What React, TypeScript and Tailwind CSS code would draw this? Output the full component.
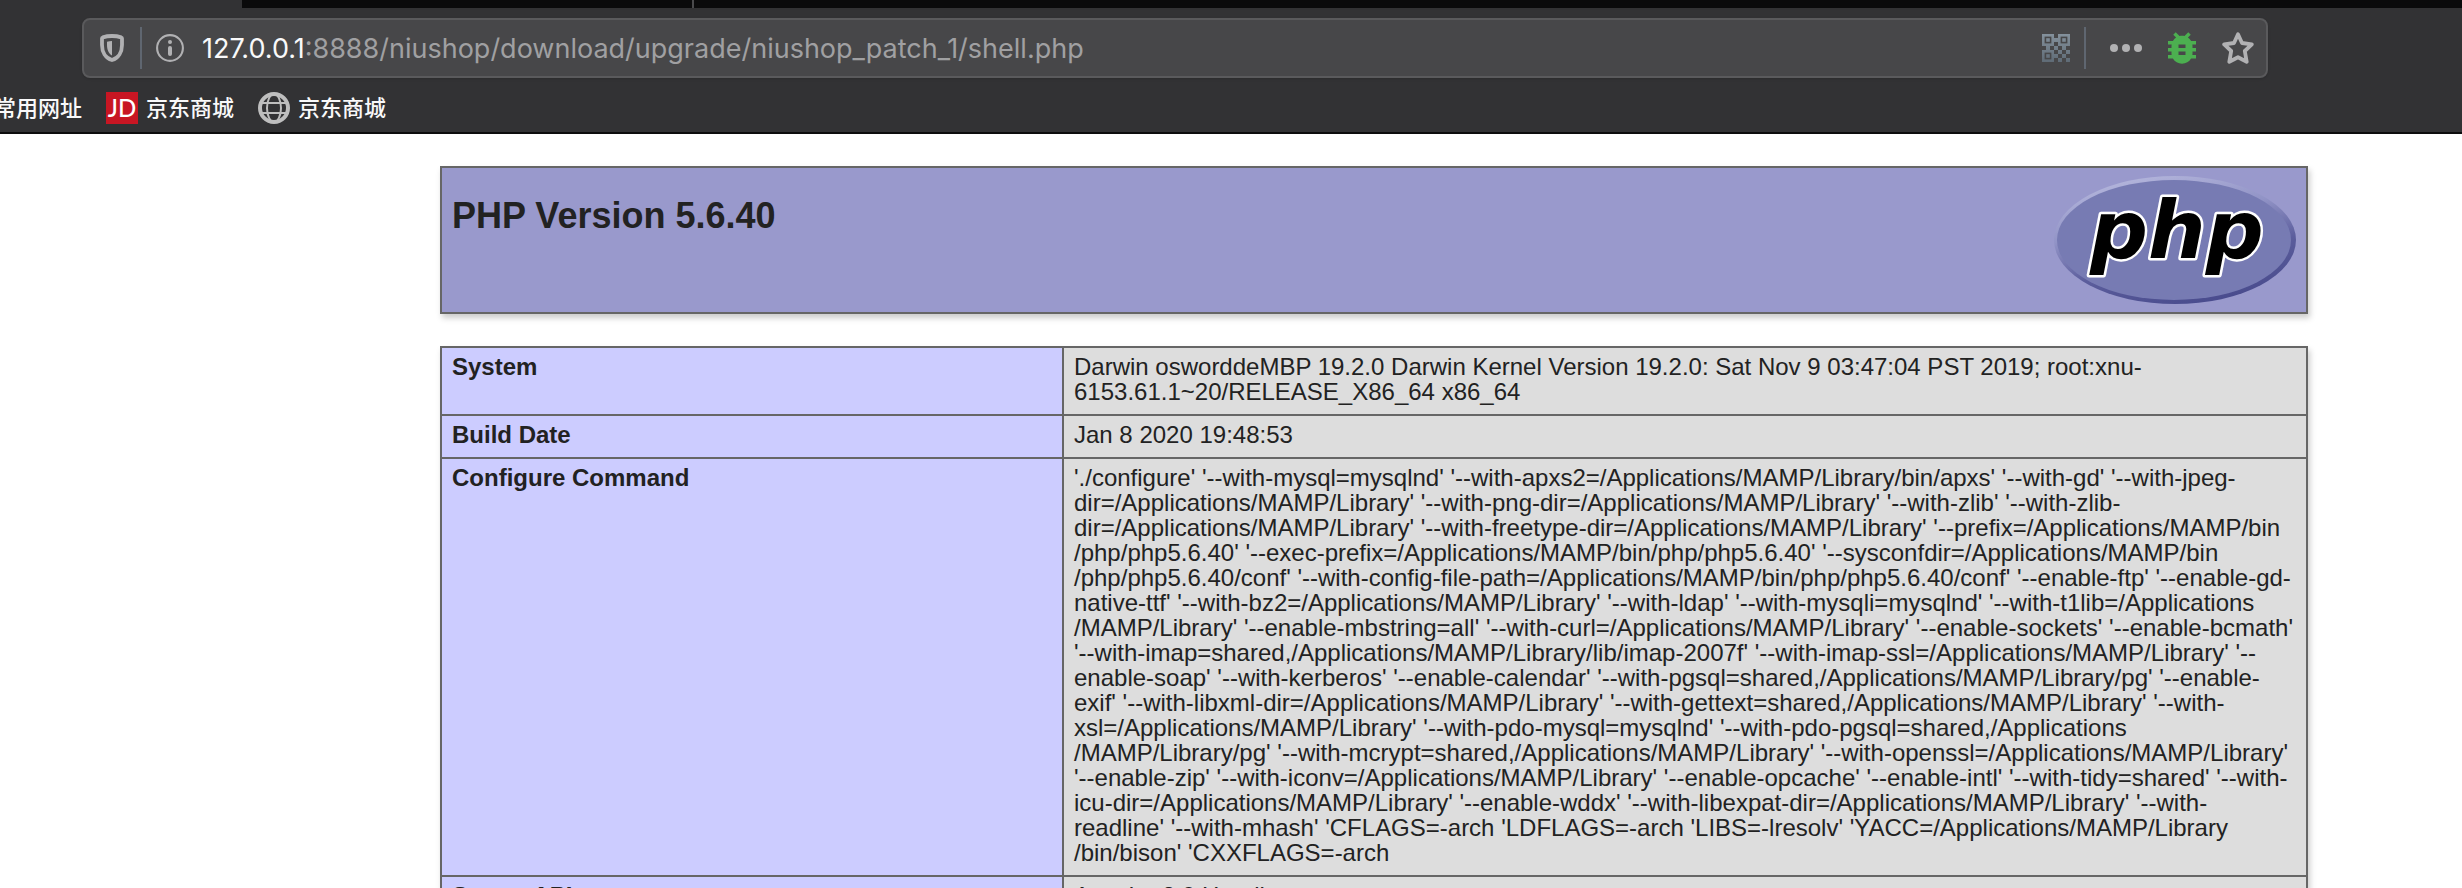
import React from "react";

const configureLines = [
  "'./configure' '--with-mysql=mysqlnd' '--with-apxs2=/Applications/MAMP/Library/bin/apxs' '--with-gd' '--with-jpeg-",
  "dir=/Applications/MAMP/Library' '--with-png-dir=/Applications/MAMP/Library' '--with-zlib' '--with-zlib-",
  "dir=/Applications/MAMP/Library' '--with-freetype-dir=/Applications/MAMP/Library' '--prefix=/Applications/MAMP/bin",
  "/php/php5.6.40' '--exec-prefix=/Applications/MAMP/bin/php/php5.6.40' '--sysconfdir=/Applications/MAMP/bin",
  "/php/php5.6.40/conf' '--with-config-file-path=/Applications/MAMP/bin/php/php5.6.40/conf' '--enable-ftp' '--enable-gd-",
  "native-ttf' '--with-bz2=/Applications/MAMP/Library' '--with-ldap' '--with-mysqli=mysqlnd' '--with-t1lib=/Applications",
  "/MAMP/Library' '--enable-mbstring=all' '--with-curl=/Applications/MAMP/Library' '--enable-sockets' '--enable-bcmath'",
  "'--with-imap=shared,/Applications/MAMP/Library/lib/imap-2007f' '--with-imap-ssl=/Applications/MAMP/Library' '--",
  "enable-soap' '--with-kerberos' '--enable-calendar' '--with-pgsql=shared,/Applications/MAMP/Library/pg' '--enable-",
  "exif' '--with-libxml-dir=/Applications/MAMP/Library' '--with-gettext=shared,/Applications/MAMP/Library' '--with-",
  "xsl=/Applications/MAMP/Library' '--with-pdo-mysql=mysqlnd' '--with-pdo-pgsql=shared,/Applications",
  "/MAMP/Library/pg' '--with-mcrypt=shared,/Applications/MAMP/Library' '--with-openssl=/Applications/MAMP/Library'",
  "'--enable-zip' '--with-iconv=/Applications/MAMP/Library' '--enable-opcache' '--enable-intl' '--with-tidy=shared' '--with-",
  "icu-dir=/Applications/MAMP/Library' '--enable-wddx' '--with-libexpat-dir=/Applications/MAMP/Library' '--with-",
  "readline' '--with-mhash' 'CFLAGS=-arch 'LDFLAGS=-arch 'LIBS=-lresolv' 'YACC=/Applications/MAMP/Library",
  "/bin/bison' 'CXXFLAGS=-arch",
];

const rows: { name: string; lines: string[] }[] = [
  {
    name: "System",
    lines: [
      "Darwin osworddeMBP 19.2.0 Darwin Kernel Version 19.2.0: Sat Nov 9 03:47:04 PST 2019; root:xnu-",
      "6153.61.1~20/RELEASE_X86_64 x86_64",
    ],
  },
  { name: "Build Date", lines: ["Jan 8 2020 19:48:53"] },
  { name: "Configure Command", lines: configureLines },
  { name: "Server API", lines: ["Apache 2.0 Handler"] },
];

function ShieldIcon() {
  return (
    <svg width="24" height="28" viewBox="0 0 24 28" fill="none">
      <path
        d="M12 2 C8.500 2 5.200 2.600 2.800 3.400 C2.300 3.600 2 4 2 4.500 V11 C2 18 5.500 24 12 26 C18.500 24 22 18 22 11 V4.500 C22 4 21.700 3.600 21.200 3.400 C18.800 2.600 15.500 2 12 2 Z"
        stroke="#b1b1b3"
        strokeWidth="3.800"
        strokeLinejoin="round"
      />
      <path d="M12 7 V21.500 C8.500 19.500 7 15.500 7 11 V7.800 C8.600 7.300 10.300 7 12 7 Z" fill="#b1b1b3" />
    </svg>
  );
}

function InfoIcon() {
  return (
    <svg width="28" height="28" viewBox="0 0 28 28" fill="none">
      <circle cx="14" cy="14" r="12.900" stroke="#b1b1b3" strokeWidth="2.100" />
      <circle cx="14" cy="8" r="2" fill="#b1b1b3" />
      <rect x="12" y="12" width="4" height="10" rx="2" fill="#b1b1b3" />
    </svg>
  );
}

const qrModules = [
  [3, 1], [1, 3], [3, 3], [5, 3], [4, 4], [6, 4], [3, 5], [5, 5], [4, 6], [6, 6],
];

function QrIcon() {
  return (
    <svg width="28" height="28" viewBox="0 0 28 28" fill="none">
      <defs>
        <linearGradient id="qr" gradientUnits="userSpaceOnUse" x1="0" y1="0" x2="0" y2="28">
          <stop offset="0" stopColor="#84919c" />
          <stop offset="1" stopColor="#5f6b76" />
        </linearGradient>
      </defs>
      <g stroke="url(#qr)" strokeWidth="2.600">
        <rect x="1.300" y="1.300" width="9.400" height="9.400" />
        <rect x="17.300" y="1.300" width="9.400" height="9.400" />
        <rect x="1.300" y="17.300" width="9.400" height="9.400" />
      </g>
      <g fill="url(#qr)">
        <rect x="4.200" y="4.200" width="3.600" height="3.600" />
        <rect x="20.200" y="4.200" width="3.600" height="3.600" />
        <rect x="4.200" y="20.200" width="3.600" height="3.600" />
        {qrModules.map(([col, row]) => (
          <rect key={`${col}-${row}`} x={col * 4} y={row * 4} width="4" height="4" />
        ))}
      </g>
    </svg>
  );
}

function DotsIcon() {
  return (
    <svg width="32" height="8" viewBox="0 0 32 8" fill="#b1b1b3">
      <circle cx="4" cy="4" r="4" />
      <circle cx="16" cy="4" r="4" />
      <circle cx="28" cy="4" r="4" />
    </svg>
  );
}

function BugIcon() {
  return (
    <svg width="28" height="32" viewBox="4 3 16 18" fill="#4caf50">
      <path d="M20 8h-2.810c-.45-.78-1.070-1.450-1.820-1.960L17 4.410 15.590 3l-2.170 2.170C12.960 5.060 12.490 5 12 5c-.49 0-.96.06-1.410.17L8.410 3 7 4.410l1.620 1.630C7.880 6.550 7.260 7.220 6.810 8H4v2h2.090c-.05.33-.09.66-.09 1v1H4v2h2v1c0 .34.04.67.09 1H4v2h2.810c1.040 1.790 2.970 3 5.190 3s4.150-1.210 5.190-3H20v-2h-2.090c.05-.33.09-.66.09-1v-1h2v-2h-2v-1c0-.34-.04-.67-.09-1H20V8zm-6 8h-4v-2h4v2zm0-4h-4v-2h4v2z" />
    </svg>
  );
}

function StarIcon() {
  return (
    <svg width="32" height="32" viewBox="0 0 32 32" fill="none">
      <path
        d="M16 2.200 L20 11 L29.800 12.400 L22.800 19 L24.700 29.800 L16 25.200 L7.300 29.800 L9.200 19 L2.200 12.400 L12 11 Z"
        stroke="#b1b1b3"
        strokeWidth="3.800"
        strokeLinejoin="round"
      />
    </svg>
  );
}

function GlobeIcon() {
  return (
    <svg width="32" height="32" viewBox="0 0 32 32" fill="none" stroke="#bebebe">
      <circle cx="16" cy="16" r="14" strokeWidth="4" />
      <ellipse cx="16" cy="16" rx="7" ry="14" strokeWidth="2" />
      <path d="M3 11 H29 M3 21 H29" strokeWidth="2" />
    </svg>
  );
}

function PhpLogo() {
  return (
    <svg width="242" height="128" viewBox="0 0 242 128" role="img" aria-label="PHP logo">
      <defs>
        <linearGradient id="rim" x1="0.300" y1="0" x2="0.700" y2="1">
          <stop offset="0" stopColor="#b4b6dc" />
          <stop offset="0.350" stopColor="#9193c6" />
          <stop offset="0.650" stopColor="#5b5d9c" />
          <stop offset="1" stopColor="#484a8c" />
        </linearGradient>
      </defs>
      <ellipse cx="121" cy="64" rx="121" ry="64" fill="url(#rim)" />
      <ellipse cx="120" cy="64" rx="117" ry="60" fill="#777bb3" />
      <text
        x="36"
        y="82"
        fontFamily="'DejaVu Sans', sans-serif"
        fontWeight="700"
        fontStyle="italic"
        fontSize="81"
        fill="#000000"
        stroke="#ffffff"
        strokeWidth="5"
        strokeLinejoin="round"
        paintOrder="stroke"
      >
        php
      </text>
    </svg>
  );
}

function BrowserChrome() {
  return (
    <header className="shrink-0 border-b-2 border-[#0c0c0d] bg-[#323234] font-[Inter,'Noto_Sans_CJK_SC',sans-serif]">
      <div className="flex h-2">
        <div className="w-[242px]" />
        <div className="w-[450px] bg-[#0a0a0b]" />
        <div className="w-0.5 bg-[#4a4a4c]" />
        <div className="grow bg-[#0a0a0b]" />
      </div>
      <div className="pt-[10px] pr-[194px] pl-[82px]">
        <div className="flex h-[60px] items-center rounded-lg border-2 border-[#5a5a5c] bg-[#474749] pr-3 pl-4 shadow-sm">
          <button aria-label="Tracking protection"><ShieldIcon /></button>
          <div className="ml-4 h-[42px] w-0.5 bg-[#5f6670]" />
          <button className="ml-[14px]" aria-label="Site information"><InfoIcon /></button>
          <div className="ml-[18px] grow pt-0.5 text-[27px] whitespace-nowrap text-[#a0a0a2]">
            <span className="text-[#f9f9fa]">127.0.0.1</span>:8888/niushop/download/upgrade/niushop_patch_1/shell.php
          </div>
          <button aria-label="QR code"><QrIcon /></button>
          <div className="ml-[14px] h-[42px] w-0.5 bg-[#5f6670]" />
          <button className="ml-6" aria-label="Page actions"><DotsIcon /></button>
          <button className="ml-[26px]" aria-label="Debugger"><BugIcon /></button>
          <button className="ml-[26px]" aria-label="Bookmark this page"><StarIcon /></button>
        </div>
      </div>
      <nav className="flex h-[54px] items-center overflow-hidden pt-1.5 text-[22px] leading-8 font-medium whitespace-nowrap text-[#f9f9fa]">
        <a href="#" className="-ml-1.5">常用网址</a>
        <a href="#" className="ml-6 flex items-center gap-2">
          <span className="flex size-8 items-center justify-center bg-[#c81623] font-[Lato,sans-serif] text-2xl text-white">JD</span>
          京东商城
        </a>
        <a href="#" className="ml-6 flex items-center gap-2">
          <GlobeIcon />
          京东商城
        </a>
      </nav>
    </header>
  );
}

export default function App() {
  return (
    <div className="flex h-screen flex-col overflow-hidden bg-white font-['Liberation_Sans',Arial,sans-serif] text-[#222222]">
      <BrowserChrome />
      <main className="flex flex-col gap-8 pt-8 pr-[154px] pl-[440px]">
        <div className="flex items-start justify-between border-2 border-[#666666] bg-[#9999cc] px-[10px] py-2 shadow-[2px_4px_6px_#cccccc]">
          <h1 className="pt-5 text-4xl leading-10 font-bold">PHP Version 5.6.40</h1>
          <PhpLogo />
        </div>
        <table className="w-full table-fixed border-collapse text-2xl leading-[25px] shadow-[2px_4px_6px_#cccccc]">
          <colgroup>
            <col className="w-[622px]" />
            <col />
          </colgroup>
          <tbody>
            {rows.map((row) => (
              <tr key={row.name}>
                <th scope="row" className="border-2 border-[#666666] bg-[#ccccff] px-[10px] pt-1.5 pb-2.5 text-left align-top font-bold">
                  {row.name}
                </th>
                <td className="border-2 border-[#666666] bg-[#dddddd] px-[10px] pt-1.5 pb-2.5 align-top whitespace-nowrap">
                  {row.lines.map((line) => (
                    <div key={line}>{line}</div>
                  ))}
                </td>
              </tr>
            ))}
          </tbody>
        </table>
      </main>
    </div>
  );
}
